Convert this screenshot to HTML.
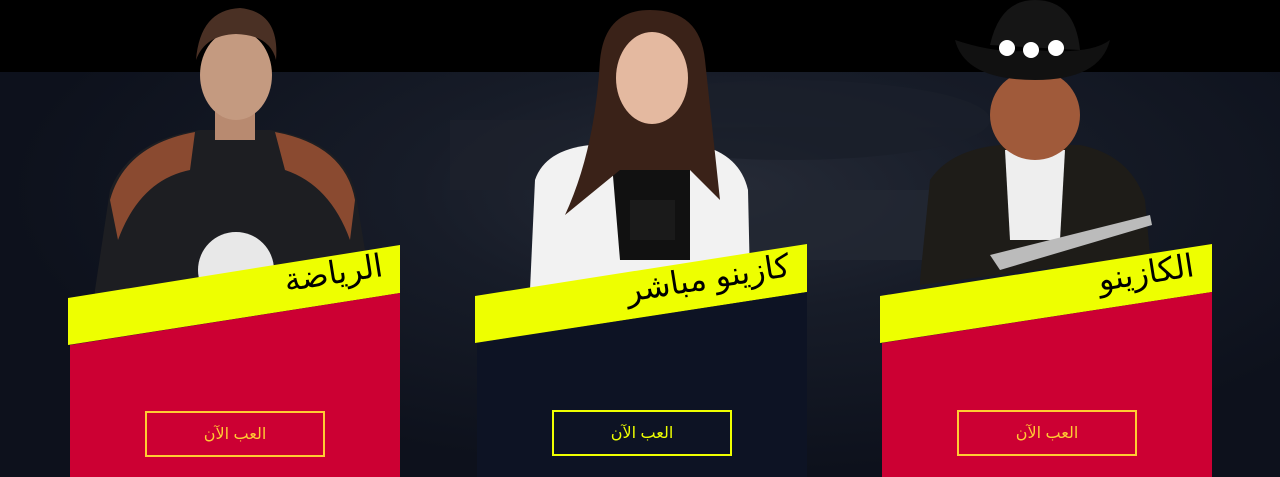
<!DOCTYPE html>
<html><head><meta charset="utf-8"><style>
*{margin:0;padding:0;box-sizing:border-box}
body{width:1280px;height:477px;overflow:hidden;background:#0e1320;position:relative;font-family:"Liberation Sans","DejaVu Sans",sans-serif}
.top{position:absolute;left:0;top:0;width:1280px;height:72px;background:#000}
.bg{position:absolute;left:0;top:72px;width:1280px;height:405px;background:radial-gradient(ellipse at 720px 120px,#262b37 0,#171c28 30%,#0d111c 70%)}
svg.fig{position:absolute;left:0;top:0}
.card{position:absolute;top:0;width:332px;height:477px}
.title{position:absolute;font-size:32px;color:#000;transform:rotate(-9deg);transform-origin:right center;white-space:nowrap;direction:rtl}
.btn{position:absolute;width:180px;height:46px;border:2px solid;display:flex;align-items:center;justify-content:center;font-size:16px;direction:rtl}
</style></head><body>
<div class="top"></div>
<div class="bg"></div>
<svg class="fig" width="1280" height="477">
 <g opacity=".8">
  <ellipse cx="790" cy="120" rx="200" ry="40" fill="#1a1f2a"/>
  <rect x="740" y="190" width="200" height="70" fill="#232833"/>
  <rect x="450" y="120" width="120" height="70" fill="#1d212c"/>
 </g>
 <path d="M95 290 L110 190 Q130 140 200 130 L270 130 Q340 140 355 190 L365 250 L95 300Z" fill="#1d1e22"/>
 <path d="M110 200 Q125 145 195 132 L190 170 Q140 180 118 240Z" fill="#8a4a30"/>
 <path d="M355 200 Q345 145 275 132 L285 170 Q330 185 350 240Z" fill="#8a4a30"/>
 <rect x="215" y="110" width="40" height="30" fill="#b88a70"/>
 <ellipse cx="236" cy="75" rx="36" ry="45" fill="#c49a80"/>
 <path d="M196 60 Q200 10 240 8 Q280 12 276 60 Q270 35 236 34 Q205 35 196 60Z" fill="#4a3024"/>
 <circle cx="236" cy="270" r="38" fill="#e8e8e8"/>
 <path d="M530 290 L535 180 Q545 150 590 145 L700 145 Q740 155 748 190 L750 280Z" fill="#f2f2f2"/>
 <path d="M610 140 L690 140 L690 260 L620 260Z" fill="#111"/>
 <path d="M600 60 Q605 10 650 10 Q700 10 705 60 L720 200 L690 170 L620 170 L565 215 Q595 150 600 60Z" fill="#3a2218"/>
 <ellipse cx="652" cy="78" rx="36" ry="46" fill="#e4b9a0"/>
 <rect x="630" y="200" width="45" height="40" fill="#1a1a1a"/>
 <path d="M920 280 L930 180 Q950 150 1000 145 L1080 145 Q1130 155 1145 200 L1150 255 L920 285Z" fill="#1e1c18"/>
 <path d="M1005 150 L1065 150 L1060 240 L1010 240Z" fill="#eeeeee"/>
 <ellipse cx="1035" cy="115" rx="45" ry="45" fill="#a05a3a"/>
 <path d="M955 40 Q1000 55 1035 50 Q1090 55 1110 40 Q1100 80 1035 80 Q965 80 955 40Z" fill="#111"/>
 <path d="M990 45 Q1000 0 1035 0 Q1075 0 1080 50Z" fill="#151515"/>
 <circle cx="1007" cy="48" r="8" fill="#fff"/><circle cx="1031" cy="50" r="8" fill="#fff"/><circle cx="1056" cy="48" r="8" fill="#fff"/>
 <path d="M990 255 L1150 215 L1152 225 L1000 270Z" fill="#bbb"/>
</svg>

<div class="card" style="left:68px">
 <svg width="332" height="477" style="position:absolute;left:0;top:0">
  <polygon points="0,298 332,245 332,293 0,345" fill="#eeff00"/>
  <polygon points="2,345 332,293 332,477 2,477" fill="#cc0033"/>
 </svg>
 <div class="title" style="right:18px;top:246px">الرياضة</div>
 <div class="btn" style="left:77px;top:411px;border-color:#ffcc33;color:#ffcc33">العب الآن</div>
</div>

<div class="card" style="left:475px">
 <svg width="332" height="477" style="position:absolute;left:0;top:0">
  <polygon points="0,296 332,244 332,292 0,343" fill="#eeff00"/>
  <polygon points="2,343 332,292 332,477 2,477" fill="#0d1324"/>
 </svg>
 <div class="title" style="right:18px;top:246px">كازينو مباشر</div>
 <div class="btn" style="left:77px;top:410px;border-color:#eeff00;color:#eeff00">العب الآن</div>
</div>

<div class="card" style="left:880px">
 <svg width="332" height="477" style="position:absolute;left:0;top:0">
  <polygon points="0,296 332,244 332,292 0,343" fill="#eeff00"/>
  <polygon points="2,343 332,292 332,477 2,477" fill="#cc0033"/>
 </svg>
 <div class="title" style="right:18px;top:246px">الكازينو</div>
 <div class="btn" style="left:77px;top:410px;border-color:#ffcc33;color:#ffcc33">العب الآن</div>
</div>
</body></html>
